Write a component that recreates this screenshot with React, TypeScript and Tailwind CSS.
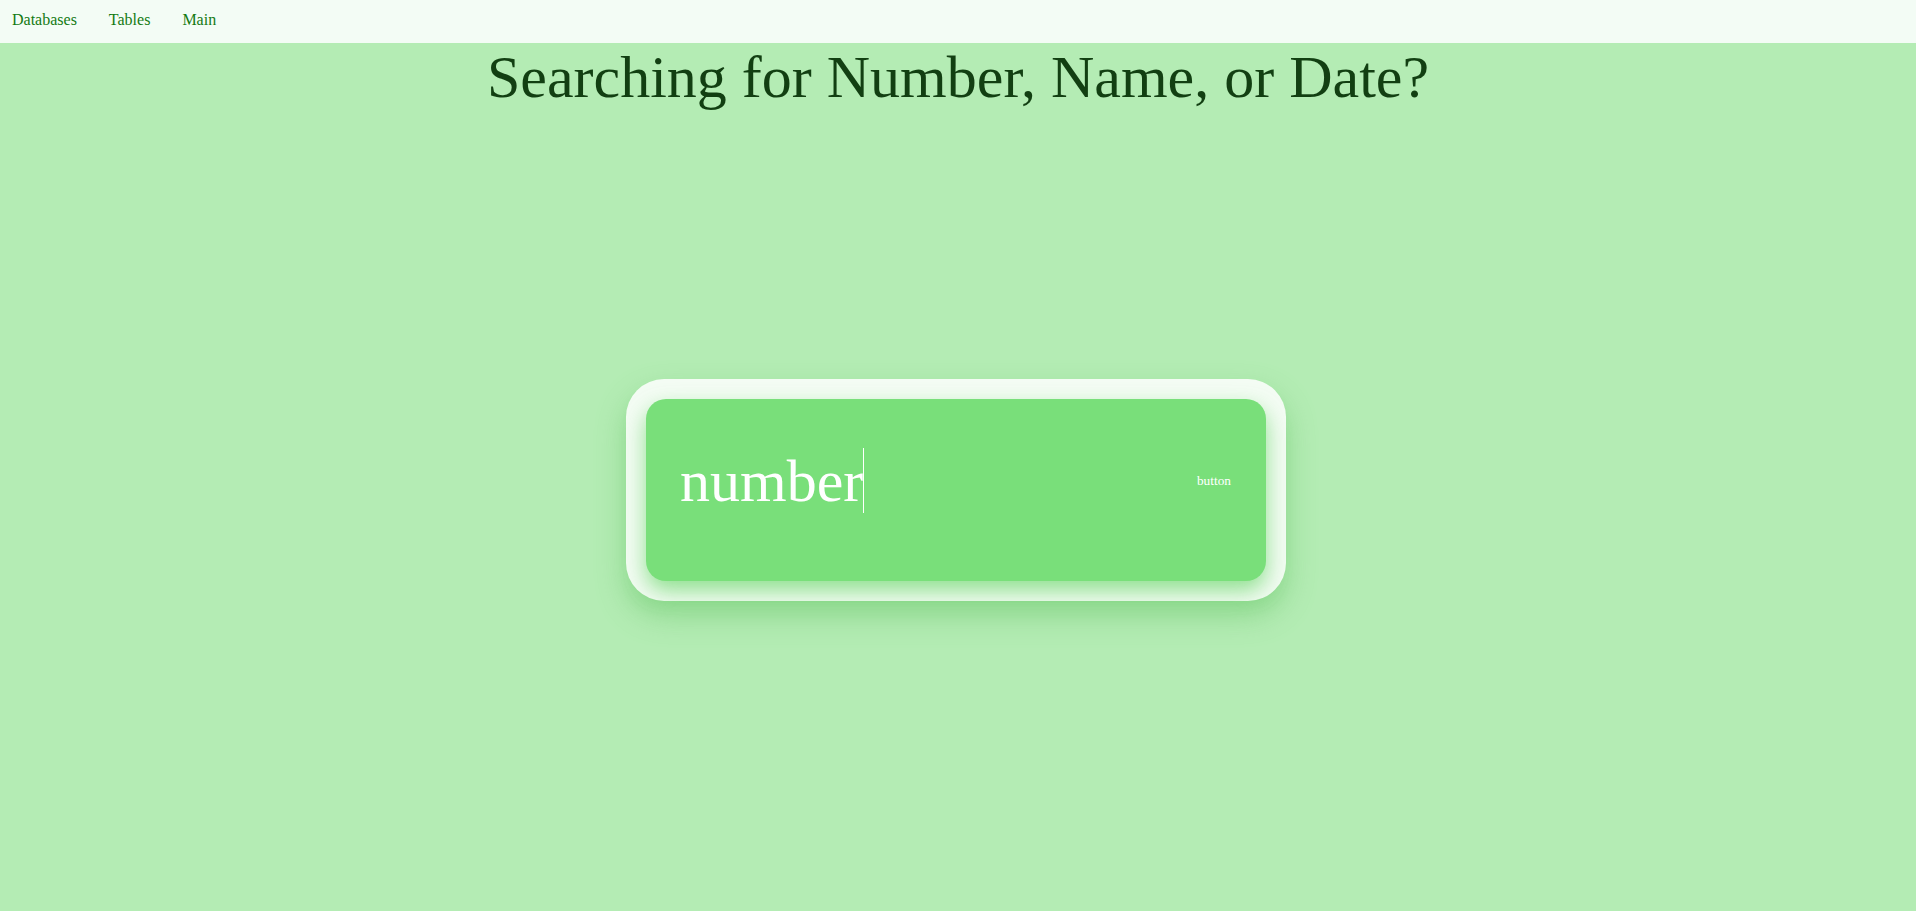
import { useState } from 'react';

const navLinks = ['Databases', 'Tables', 'Main'];

export default function App() {
  const [query, setQuery] = useState('number');

  return (
    <div className="min-h-screen bg-[#b4ecb4] font-['Liberation_Serif',serif]">
      {/* Top nav */}
      <nav className="h-[43px] bg-[#f3fcf5] flex items-center pl-3 pb-[3px] gap-[32px] text-[16px] text-[#137a13]">
        {navLinks.map((link) => (
          <a key={link} href="#" className="leading-none">
            {link}
          </a>
        ))}
      </nav>

      {/* Heading */}
      <h1 className="mt-[4px] text-center text-[60px] leading-none text-[#123f12]">
        Searching for Number, Name, or Date?
      </h1>

      {/* Search card */}
      <div className="mt-[272px] flex justify-center pr-1">
        <div className="w-[660px] p-5 rounded-[38px] bg-[#f4fcf4] shadow-[0_14px_30px_rgba(90,190,90,0.45)]">
          <div className="h-[182px] rounded-[20px] bg-[#79df7a] shadow-[0_10px_22px_rgba(110,215,110,0.75)] flex items-start pt-[49px] pl-[34px] pr-[35px]">
            <div className="flex-1 flex items-center h-[65px]">
              <span className="text-[60px] leading-none text-white">{query}</span>
              <span className="w-px h-[65px] bg-white" />
              <input
                value={query}
                onChange={(e) => setQuery(e.target.value)}
                className="sr-only"
              />
            </div>
            <button className="h-[65px] text-[13.33px] text-white leading-none">button</button>
          </div>
        </div>
      </div>
    </div>
  );
}
